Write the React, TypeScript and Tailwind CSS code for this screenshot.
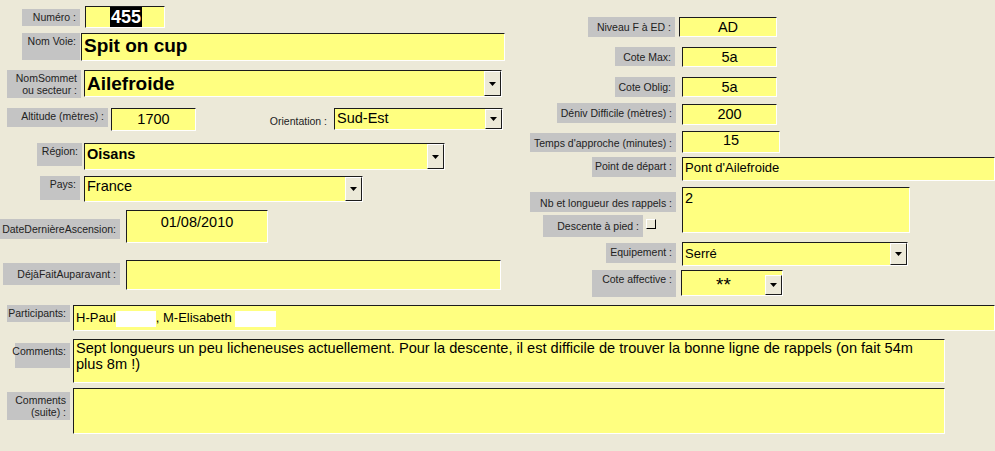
import React from 'react'

// gray Access-style caption, text hugging the top-right corner
function Label({ className = '', children, plain }: { className?: string; children: React.ReactNode; plain?: boolean }) {
  return (
    <div
      className={`flex shrink-0 justify-end whitespace-nowrap pr-[4px] pt-[2px] text-right text-[10.5px] leading-[12px] text-[#222] ${plain ? '' : 'bg-[#c4c4c4]'} ${className}`}
    >
      <span>{children}</span>
    </div>
  )
}

// sunken yellow text box, optionally with a combo arrow
function Field({
  className = '', children, combo, center,
}: { className?: string; children?: React.ReactNode; combo?: boolean; center?: boolean }) {
  return (
    <div
      className={`flex shrink-0 border-t border-l border-t-[#1c1c1c] border-l-[#1c1c1c] border-b border-r border-b-white border-r-white bg-[#ffff80] ${className}`}
    >
      <div className={`flex-1 overflow-hidden px-[2px] ${center ? 'text-center' : ''}`}>{children}</div>
      {combo && (
        <div className="flex w-[17px] items-center justify-center border-t border-l border-t-white border-l-white border-r border-b border-r-[#1c1c1c] border-b-[#1c1c1c] bg-[#ece9d8]">
          <svg width="7" height="4" viewBox="0 0 7 4">
            <path d="M0 0h7L3.5 4z" fill="#000" />
          </svg>
        </div>
      )}
    </div>
  )
}

export default function App() {
  return (
    <div className="flex h-[451px] w-[995px] flex-col overflow-hidden bg-[#ece9d8] font-['Liberation_Sans',Arial,sans-serif] text-black">
      <div className="flex h-[305px] shrink-0">
        {/* left column */}
        <div className="flex w-[530px] shrink-0 flex-col pt-[6px]">
          <div className="flex items-start pl-[22px]">
            <Label className="mt-[3px] h-[17px] w-[58px]">Numéro :</Label>
            <Field className="ml-[5px] h-[22px] w-[80px] text-[18px] font-bold leading-[20px]">
              <span className="ml-[22px] bg-black px-[1px] text-white">455</span>
            </Field>
          </div>

          <div className="mt-[5px] flex items-start pl-[22px]">
            <Label className="h-[27px] w-[58px]">Nom Voie:</Label>
            <Field className="ml-[1px] h-[28px] w-[424px] text-[19px] font-bold leading-[24px]">Spit on cup</Field>
          </div>

          <div className="mt-[9px] flex items-start pl-[7px]">
            <Label className="h-[28px] w-[74px]">NomSommet<br />ou secteur :</Label>
            <Field combo className="ml-[3px] h-[27px] w-[418px] text-[19px] font-bold leading-[26px]">Ailefroide</Field>
          </div>

          <div className="mt-[10px] flex items-start pl-[7px]">
            <Label className="h-[19px] w-[101px]">Altitude (mètres) :</Label>
            <Field center className="ml-[3px] h-[23px] w-[85px] text-[14.5px] leading-[21px]">1700</Field>
            <Label plain className="ml-[54px] mt-[5px] h-[16px] w-[81px]">Orientation :</Label>
            <Field combo className="ml-[3px] h-[22px] w-[169px] text-[14.5px] leading-[19px]">Sud-Est</Field>
          </div>

          <div className="mt-[12px] flex items-start pl-[37px]">
            <Label className="h-[23px] w-[45px]">Région:</Label>
            <Field combo className="ml-[2px] h-[27px] w-[361px] text-[14.5px] font-bold leading-[20px]">Oisans</Field>
          </div>

          <div className="mt-[6px] flex items-start pl-[40px]">
            <Label className="h-[24px] w-[40px]">Pays:</Label>
            <Field combo className="ml-[4px] h-[26px] w-[279px] text-[14.5px] leading-[18px]">France</Field>
          </div>

          <div className="mt-[8px] flex items-start">
            <Label className="mt-[9px] h-[20px] w-[120px] pt-[4px]">DateDernièreAscension:</Label>
            <Field center className="ml-[6px] h-[33px] w-[142px] text-[14.5px] leading-[22px]">01/08/2010</Field>
          </div>

          <div className="mt-[17px] flex items-start pl-[3px]">
            <Label className="mt-[3px] h-[22px] w-[117px] pt-[5px]">DéjàFaitAuparavant :</Label>
            <Field className="ml-[6px] h-[30px] w-[375px]" />
          </div>
        </div>

        {/* right column */}
        <div className="flex flex-1 flex-col pt-[17px]">
          <div className="flex items-start">
            <div className="flex w-[145px] justify-end">
              <Label className="h-[20px] w-[87px] pt-[4px]">Niveau F à ED :</Label>
            </div>
            <Field center className="ml-[4px] h-[20px] w-[98px] text-[14.5px] leading-[19px]">AD</Field>
          </div>

          <div className="mt-[10px] flex items-start">
            <div className="flex w-[145px] justify-end">
              <Label className="h-[19px] w-[60px] pt-[4px]">Cote Max:</Label>
            </div>
            <Field center className="ml-[7px] h-[20px] w-[95px] text-[14.5px] leading-[19px]">5a</Field>
          </div>

          <div className="mt-[10px] flex items-start">
            <div className="flex w-[145px] justify-end">
              <Label className="h-[20px] w-[60px] pt-[4px]">Cote Oblig:</Label>
            </div>
            <Field center className="ml-[7px] h-[20px] w-[95px] text-[14.5px] leading-[19px]">5a</Field>
          </div>

          <div className="mt-[6px] flex items-start">
            <div className="flex w-[146px] justify-end">
              <Label className="h-[20px] w-[119px] pt-[4px]">Déniv Difficile (mètres) :</Label>
            </div>
            <Field center className="ml-[6px] mt-[1px] h-[21px] w-[95px] text-[14.5px] leading-[18px]">200</Field>
          </div>

          <div className="mt-[6px] flex items-start">
            <div className="flex w-[146px] justify-end">
              <Label className="mt-[2px] h-[19px] w-[146px] pt-[4px]">Temps d'approche (minutes) :</Label>
            </div>
            <Field center className="ml-[6px] h-[22px] w-[98px] text-[14.5px] leading-[17px]">15</Field>
          </div>

          <div className="mt-[4px] flex items-start">
            <div className="flex w-[146px] justify-end">
              <Label className="h-[20px] w-[84px] pt-[3px]">Point de départ :</Label>
            </div>
            <Field className="ml-[6px] h-[24px] w-[313px] text-[13px] leading-[20px]">Pont d'Ailefroide</Field>
          </div>

          <div className="mt-[6px] flex items-start">
            <div className="flex w-[146px] flex-col items-end">
              <Label className="mt-[5px] h-[20px] w-[146px] pt-[5px]">Nb et longueur des rappels :</Label>
              <div className="mt-[3px] flex items-start self-start pl-[13px]">
                <Label className="h-[22px] w-[100px] pt-[5px]">Descente à pied :</Label>
                <div className="ml-[3px] mt-[4px] h-[10px] w-[10px] border-t border-l border-t-white border-l-white border-r border-b border-r-black border-b-black bg-[#ece9d8]" />
              </div>
            </div>
            <Field className="ml-[6px] h-[46px] w-[228px] text-[14.5px] leading-[20px]">2</Field>
          </div>

          <div className="mt-[5px] flex items-start">
            <div className="flex w-[146px] justify-end">
              <Label className="mt-[1px] h-[20px] w-[70px] pt-[3px]">Equipement :</Label>
            </div>
            <Field combo className="ml-[6px] h-[24px] w-[226px] text-[13px] leading-[21px]">Serré</Field>
          </div>

          <div className="mt-[4px] flex items-start">
            <div className="flex w-[146px] justify-end">
              <Label className="h-[27px] w-[84px] pt-[3px]">Cote affective :</Label>
            </div>
            <Field combo center className="ml-[5px] h-[26px] w-[102px] pt-[4px] text-[19px] leading-[20px]">**</Field>
          </div>
        </div>
      </div>

      {/* bottom rows */}
      <div className="flex flex-col">
        <div className="flex items-start">
          <div className="flex w-[70px] justify-end">
            <Label className="h-[17px] w-[63px]">Participants:</Label>
          </div>
          <Field className="ml-[3px] h-[26px] w-[922px] text-[13px] leading-[23px]">
            H-Paul<span className="inline-block h-[16px] w-[40px] bg-white align-middle" />, M-Elisabeth <span className="inline-block h-[16px] w-[41px] bg-white align-middle" />
          </Field>
        </div>

        <div className="mt-[8px] flex items-start">
          <div className="flex w-[70px] justify-end">
            <Label className="mt-[4px] h-[25px] w-[55px]">Comments:</Label>
          </div>
          <Field className="ml-[3px] h-[44px] w-[872px] text-[14.6px] leading-[16px]">
            Sept longueurs un peu licheneuses actuellement. Pour la descente, il est difficile de trouver la bonne ligne de rappels (on fait 54m plus 8m !)
          </Field>
        </div>

        <div className="mt-[5px] flex items-start">
          <div className="flex w-[70px] justify-end">
            <Label className="mt-[4px] h-[28px] w-[63px]">Comments<br />(suite) :</Label>
          </div>
          <Field className="ml-[3px] h-[46px] w-[872px]" />
        </div>
      </div>
    </div>
  )
}
